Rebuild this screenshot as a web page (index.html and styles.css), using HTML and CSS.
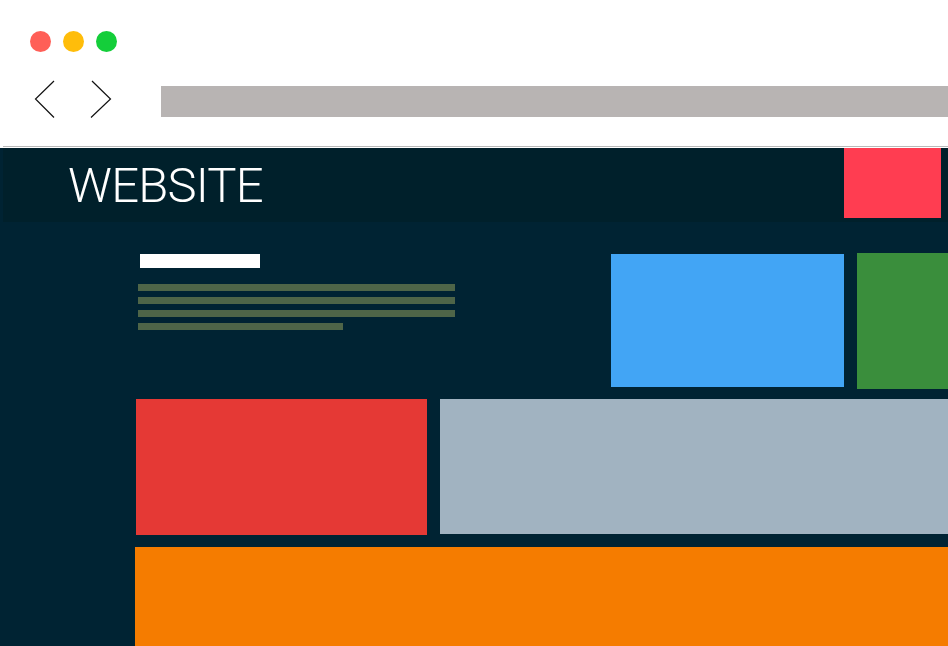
FILE: index.html
```html
<!DOCTYPE html>
<html lang="en">
<head>
  <meta charset="UTF-8">
  <title>Website Mockup</title>
  <link rel="stylesheet" href="styles.css">
</head>
<body>
  <div class="chrome">
    <div class="dots">
      <span class="dot red"></span>
      <span class="dot yellow"></span>
      <span class="dot green"></span>
    </div>
    <div class="nav">
      <svg class="arrows" width="130" height="40" viewBox="0 0 130 40">
        <polyline points="54,1 35.5,19 54,37.5" fill="none" stroke="#111" stroke-width="1.2"/>
        <polyline points="92,1 110.5,19 91,37.5" fill="none" stroke="#111" stroke-width="1.2"/>
      </svg>
      <div class="address"></div>
    </div>
    <div class="divider"></div>
  </div>

  <div class="site">
    <div class="header">
      <div class="logo">WEBSITE</div>
      <div class="menu-box"></div>
    </div>

    <div class="row-one">
      <div class="intro">
        <div class="title-bar"></div>
        <div class="line"></div>
        <div class="line"></div>
        <div class="line"></div>
        <div class="line short"></div>
      </div>
      <div class="tile blue"></div>
      <div class="tile green-tile"></div>
    </div>

    <div class="row-two">
      <div class="tile red-tile"></div>
      <div class="tile gray"></div>
    </div>

    <div class="orange"></div>
  </div>
</body>
</html>
```

FILE: styles.css
```css
body {
  margin: 0;
  width: 948px;
  height: 646px;
  overflow: hidden;
  background: #fff;
  font-family: Roboto, "Liberation Sans", sans-serif;
}

.chrome {
  height: 148px;
  background: #fff;
}

.dots {
  display: flex;
  gap: 12px;
  padding: 31px 0 0 30px;
}

.dot {
  width: 21px;
  height: 21px;
  border-radius: 50%;
}

.dot.red { background: #ff5f57; }
.dot.yellow { background: #ffbd0a; }
.dot.green { background: #14ce3a; }

.nav {
  display: flex;
  align-items: flex-start;
  margin-top: 28px;
}

.arrows {
  display: block;
  flex: none;
  width: 130px;
  height: 40px;
}

.address {
  flex: 1;
  height: 31px;
  margin: 6px 0 0 31px;
  background: #b8b4b3;
}

.divider {
  height: 1px;
  margin: 26px 0 0 3px;
  background: #b9b9b9;
}

.site {
  height: 498px;
  background: #002333;
  overflow: hidden;
}

.header {
  display: flex;
  justify-content: space-between;
  height: 74px;
  margin-left: 3px;
  background: #00202b;
}

.logo {
  padding: 10px 0 0 65px;
  font-size: 49px;
  font-weight: 300;
  line-height: 56px;
  letter-spacing: -0.8px;
  color: #fff;
}

.menu-box {
  width: 97px;
  height: 70px;
  margin-right: 7px;
  background: #ff3d51;
}

.row-one {
  display: flex;
  align-items: flex-start;
  margin-top: 31px;
  padding-left: 138px;
}

.intro {
  width: 317px;
  padding-top: 1px;
}

.title-bar {
  width: 120px;
  height: 14px;
  margin: 0 0 16px 2px;
  background: #fff;
}

.line {
  height: 7px;
  margin-bottom: 6px;
  background: #4e6548;
}

.line.short {
  width: 205px;
}

.tile.blue {
  width: 233px;
  height: 133px;
  margin: 1px 0 0 156px;
  background: #42a5f5;
}

.tile.green-tile {
  flex: 1;
  height: 136px;
  margin-left: 13px;
  background: #3a8e3c;
}

.row-two {
  display: flex;
  align-items: flex-start;
  margin-top: 10px;
  padding-left: 136px;
  gap: 13px;
}

.tile.red-tile {
  width: 291px;
  height: 136px;
  background: #e53935;
}

.tile.gray {
  flex: 1;
  height: 135px;
  background: #a1b3c1;
}

.orange {
  height: 99px;
  margin: 12px 0 0 135px;
  background: #f57c00;
}
```
